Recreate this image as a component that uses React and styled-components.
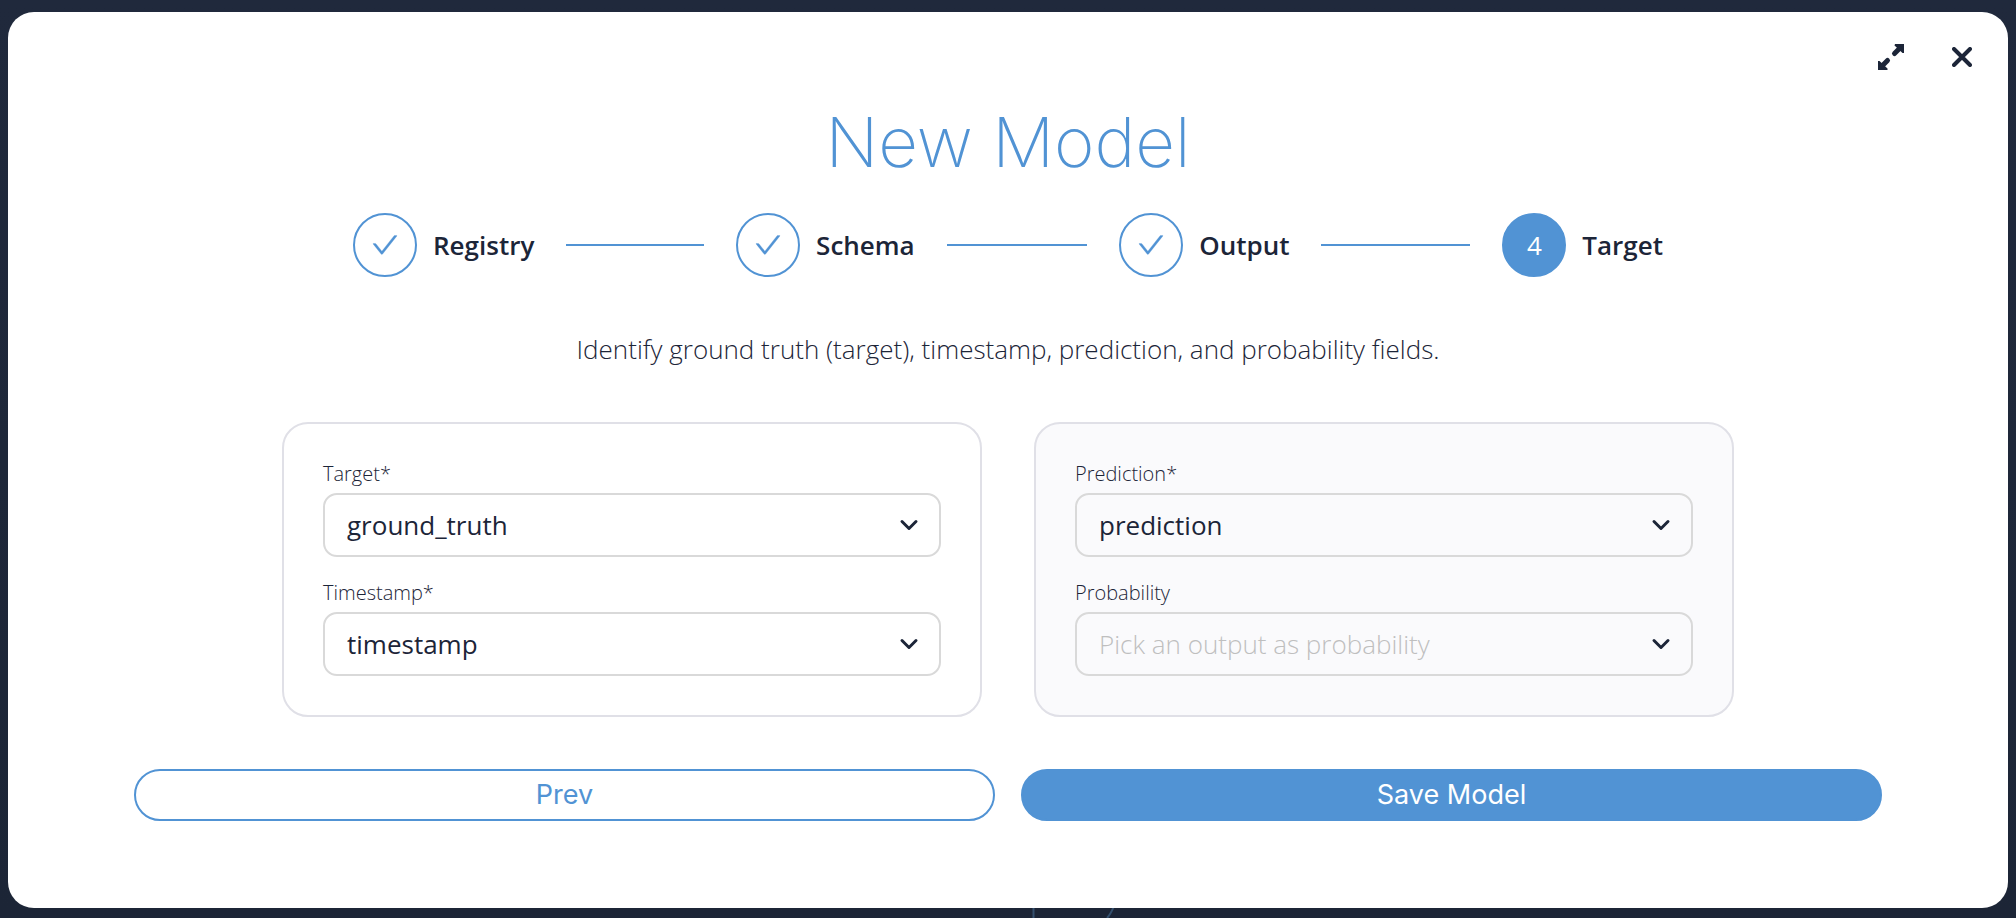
import React from "react";
import styled, { createGlobalStyle } from "styled-components";

const BLUE = "#5193d4";
const INK = "#1c2538";

const GlobalStyle = createGlobalStyle`
  *, *::before, *::after { box-sizing: border-box; }
  body {
    margin: 0;
    color: ${INK};
    background: #1f283a;
    font-family: "Open Sans", "Noto Sans", sans-serif;
  }
`;

const Backdrop = styled.div`
  position: relative;
  display: flex;
  min-height: 100vh;
  padding: 12px 8px 10px;
  background: linear-gradient(#20293c, #1c2536);
`;

const BackdropArt = styled.svg`
  position: absolute;
  bottom: 0;
  left: 50%;
  width: 120px;
  height: 12px;
`;

const Dialog = styled.main`
  position: relative;
  flex: 1;
  padding: 90px 6% 86px;
  border-radius: 26px;
  background: #fff;
`;

const WindowActions = styled.div`
  position: absolute;
  top: 25px;
  right: 26px;
  display: flex;
  gap: 31px;
`;

const IconButton = styled.button`
  display: grid;
  place-items: center;
  width: 40px;
  height: 40px;
  padding: 0;
  border: 0;
  color: ${INK};
  background: none;
  cursor: pointer;
`;

const Title = styled.h1`
  margin: 0 0 31px;
  color: ${BLUE};
  font: 200 69px/80px Inter, sans-serif;
  text-align: center;
`;

const Steps = styled.ol`
  display: flex;
  max-width: 1310px;
  margin: 0 auto 54px;
  padding: 0;
  list-style: none;
`;

const Step = styled.li`
  display: flex;
  flex: 1;
  align-items: center;
  gap: 16px;
  font-size: 26px;
  font-weight: 600;
  line-height: 36px;

  &:last-child { flex: none; }
`;

const StepCircle = styled.span`
  display: grid;
  flex: none;
  place-items: center;
  width: 64px;
  height: 64px;
  border: 2px solid ${BLUE};
  border-radius: 50%;
  color: ${({ $active }) => ($active ? "#fff" : BLUE)};
  background: ${({ $active }) => ($active ? BLUE : "#fff")};
  font-weight: 400;
`;

const StepLine = styled.span`
  flex: 1;
  height: 2px;
  margin: 0 32px 0 16px;
  background: ${BLUE};
`;

const Description = styled.p`
  margin: 0 0 55px;
  font-size: 26px;
  font-weight: 300;
  line-height: 36px;
  text-align: center;
`;

const Panels = styled.div`
  display: grid;
  grid-template-columns: 1fr 1fr;
  gap: 52px;
  max-width: 1452px;
  margin: 0 auto 52px;
`;

const Panel = styled.section`
  display: flex;
  flex-direction: column;
  gap: 25px;
  padding: 39px;
  border: 2px solid #e0e0e7;
  border-radius: 26px;
  background: ${({ $tinted }) => ($tinted ? "#fafafc" : "#fff")};
`;

const Field = styled.div`
  display: flex;
  flex-direction: column;
  gap: 8px;
`;

const Label = styled.label`
  font-size: 20px;
  font-weight: 300;
  line-height: 22px;
`;

const SelectBox = styled.div`
  position: relative;
  display: flex;
`;

const Select = styled.select`
  flex: 1;
  height: 64px;
  padding: 0 64px 0 22px;
  border: 2px solid #d9d9d9;
  border-radius: 14px;
  color: ${({ $empty }) => ($empty ? "#bfbfbf" : INK)};
  background: transparent;
  font-family: inherit;
  font-size: 26px;
  font-weight: ${({ $empty }) => ($empty ? 300 : 400)};
  appearance: none;
`;

const Chevron = styled.svg`
  position: absolute;
  top: 20px;
  right: 20px;
  width: 24px;
  height: 24px;
  pointer-events: none;
`;

const Footer = styled.footer`
  display: grid;
  grid-template-columns: 1fr 1fr;
  gap: 26px;
  max-width: 1748px;
  margin: 0 auto;
`;

const Button = styled.button`
  height: 52px;
  padding: 0 26px;
  border: 2px solid ${BLUE};
  border-radius: 26px;
  color: ${({ $primary }) => ($primary ? "#fff" : BLUE)};
  background: ${({ $primary }) => ($primary ? BLUE : "#fff")};
  font: 400 27px/32px Inter, sans-serif;
  cursor: pointer;
`;

const CheckIcon = () => (
  <svg width="30" height="30" viewBox="0 0 1024 1024" fill="currentColor" stroke="currentColor" strokeWidth="10" aria-hidden="true">
    <path d="M912 190h-69.9c-9.8 0-19.1 4.5-25.1 12.2L404.7 724.5 207 474a32 32 0 0 0-25.1-12.2H112c-6.7 0-10.4 7.7-6.3 12.9l273.9 347c12.8 16.2 37.4 16.2 50.3 0l488.4-618.9c4.1-5.1.4-12.8-6.3-12.8z" />
  </svg>
);

const ExpandIcon = () => (
  <svg width="26" height="26" viewBox="0 0 26 26" aria-hidden="true">
    <path fill="currentColor" d="M17 0H26V9H24.500L16.500 1.500Z M0 17H1.500L9.500 24.500V26H0Z" />
    <path stroke="currentColor" strokeWidth="5" strokeLinecap="round" d="M16.500 9.500l5-5M9.500 16.500l-5 5" />
  </svg>
);

const CloseIcon = () => (
  <svg width="20" height="20" viewBox="0 0 20 20" aria-hidden="true">
    <path stroke="currentColor" strokeWidth="4" strokeLinecap="round" d="M2 2l16 16M18 2L2 18" />
  </svg>
);

const steps = ["Registry", "Schema", "Output", "Target"];
const current = 3;

const panels = [
  {
    name: "Inputs",
    fields: [
      { id: "target", label: "Target*", value: "ground_truth" },
      { id: "timestamp", label: "Timestamp*", value: "timestamp" },
    ],
  },
  {
    name: "Outputs",
    tinted: true,
    fields: [
      { id: "prediction", label: "Prediction*", value: "prediction" },
      { id: "probability", label: "Probability", placeholder: "Pick an output as probability" },
    ],
  },
];

function SelectField({ id, label, value, placeholder }) {
  return (
    <Field>
      <Label htmlFor={id}>{label}</Label>
      <SelectBox>
        <Select id={id} $empty={!value} defaultValue={value || ""}>
          <option value={value || ""}>{value || placeholder}</option>
        </Select>
        <Chevron viewBox="0 0 24 24" fill="none" aria-hidden="true">
          <path stroke={INK} strokeWidth="3" strokeLinecap="round" strokeLinejoin="round" d="M5 8.500l7 7 7-7" />
        </Chevron>
      </SelectBox>
    </Field>
  );
}

export default function App() {
  return (
    <>
      <GlobalStyle />
      <Backdrop>
        <BackdropArt viewBox="0 0 120 12" fill="none" stroke="#34506e" strokeWidth="2" aria-hidden="true">
          <path d="M25.500 0V12M106 0C104 5 102 9 99 12" />
        </BackdropArt>
        <Dialog>
          <WindowActions>
            <IconButton type="button" aria-label="Expand"><ExpandIcon /></IconButton>
            <IconButton type="button" aria-label="Close"><CloseIcon /></IconButton>
          </WindowActions>
          <Title>New Model</Title>
          <Steps>
            {steps.map((step, i) => (
              <Step key={step} aria-current={i === current ? "step" : undefined}>
                <StepCircle $active={i === current}>{i < current ? <CheckIcon /> : i + 1}</StepCircle>
                {step}
                {i < steps.length - 1 && <StepLine />}
              </Step>
            ))}
          </Steps>
          <Description>Identify ground truth (target), timestamp, prediction, and probability fields.</Description>
          <Panels>
            {panels.map(({ name, tinted, fields }) => (
              <Panel key={name} $tinted={tinted}>
                {fields.map((field) => <SelectField key={field.id} {...field} />)}
              </Panel>
            ))}
          </Panels>
          <Footer>
            <Button type="button">Prev</Button>
            <Button type="button" $primary>Save Model</Button>
          </Footer>
        </Dialog>
      </Backdrop>
    </>
  );
}
